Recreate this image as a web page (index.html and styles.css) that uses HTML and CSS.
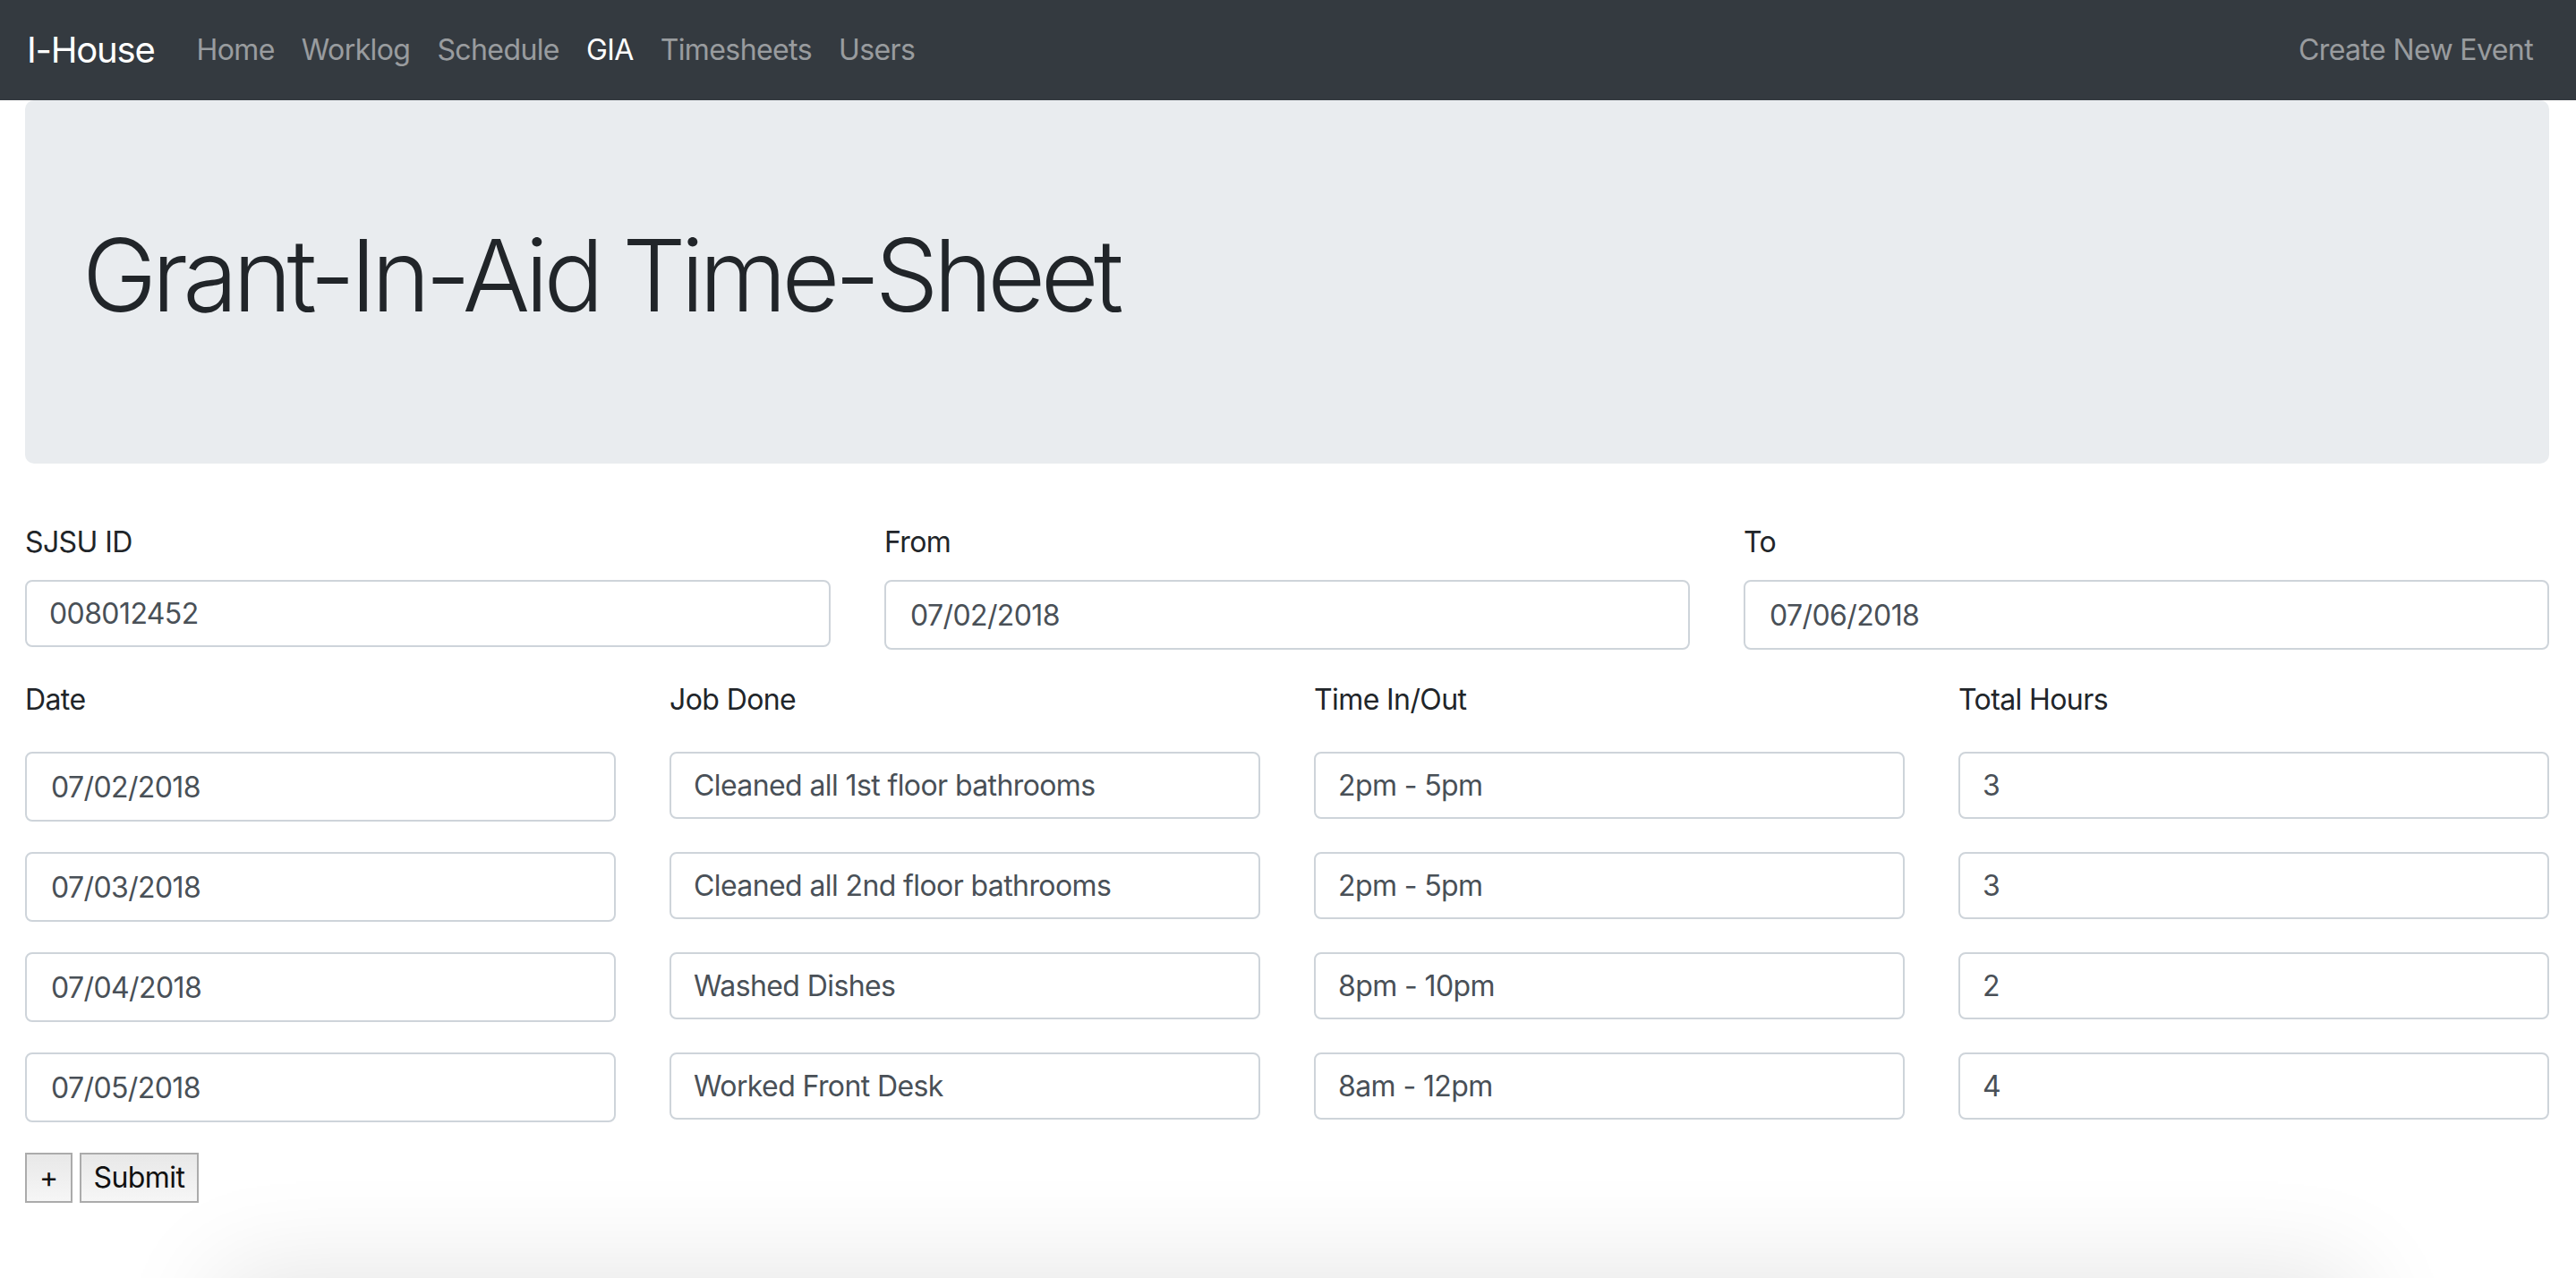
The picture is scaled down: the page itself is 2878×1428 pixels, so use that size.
FILE: index.html
```html
<!DOCTYPE html>
<html lang="en">
<head>
<meta charset="utf-8">
<title>Grant-In-Aid Time-Sheet</title>
<link rel="stylesheet" href="styles.css">
</head>
<body>
<nav class="navbar">
  <a class="brand" href="#">I-House</a>
  <ul class="nav">
    <li><a class="nav-link" href="#">Home</a></li>
    <li><a class="nav-link" href="#">Worklog</a></li>
    <li><a class="nav-link" href="#">Schedule</a></li>
    <li><a class="nav-link active" href="#">GIA</a></li>
    <li><a class="nav-link" href="#">Timesheets</a></li>
    <li><a class="nav-link" href="#">Users</a></li>
  </ul>
  <ul class="nav nav-right">
    <li><a class="nav-link" href="#">Create New Event</a></li>
  </ul>
</nav>
<main class="container">
  <div class="jumbotron">
    <h1 class="display">Grant-In-Aid Time-Sheet</h1>
  </div>
  <form class="sheet">
    <div class="grid3 group">
      <div class="field">
        <label class="label">SJSU ID</label>
        <input class="control" type="text" value="008012452">
      </div>
      <div class="field">
        <label class="label">From</label>
        <input class="control date" type="text" value="07/02/2018">
      </div>
      <div class="field">
        <label class="label">To</label>
        <input class="control date" type="text" value="07/06/2018">
      </div>
    </div>
    <div class="grid4 heads">
      <label class="label">Date</label>
      <label class="label">Job Done</label>
      <label class="label">Time In/Out</label>
      <label class="label">Total Hours</label>
    </div>
    <div class="grid4 entry">
      <input class="control date" type="text" value="07/02/2018">
      <input class="control" type="text" value="Cleaned all 1st floor bathrooms">
      <input class="control" type="text" value="2pm - 5pm">
      <input class="control" type="text" value="3">
    </div>
    <div class="grid4 entry">
      <input class="control date" type="text" value="07/03/2018">
      <input class="control" type="text" value="Cleaned all 2nd floor bathrooms">
      <input class="control" type="text" value="2pm - 5pm">
      <input class="control" type="text" value="3">
    </div>
    <div class="grid4 entry">
      <input class="control date" type="text" value="07/04/2018">
      <input class="control" type="text" value="Washed Dishes">
      <input class="control" type="text" value="8pm - 10pm">
      <input class="control" type="text" value="2">
    </div>
    <div class="grid4 entry">
      <input class="control date" type="text" value="07/05/2018">
      <input class="control" type="text" value="Worked Front Desk">
      <input class="control" type="text" value="8am - 12pm">
      <input class="control" type="text" value="4">
    </div>
    <div class="actions">
      <button class="btn" type="button">+</button>
      <button class="btn" type="submit">Submit</button>
    </div>
  </form>
  <div class="below-card"></div>
</main>
</body>
</html>
```

FILE: styles.css
```css
html, body {
  margin: 0;
  padding: 0;
  overflow: hidden;
  background: #fff;
}
body {
  font-family: Inter, "Noto Sans", "Liberation Sans", sans-serif;
  font-size: 32px;
  line-height: 1.5;
  letter-spacing: -0.6px;
  color: #212529;
}
a { text-decoration: none; }

.navbar {
  display: flex;
  align-items: center;
  height: 112px;
  box-sizing: border-box;
  padding: 16px 32px 16px 30px;
  background: #343a40;
}
.brand {
  font-size: 40px;
  line-height: 60px;
  letter-spacing: -1.2px;
  padding: 10px 0;
  margin-right: 32px;
  color: #fff;
  white-space: nowrap;
}
.nav {
  display: flex;
  list-style: none;
  margin: 0;
  padding: 0;
}
.nav-right { margin-left: auto; }
.nav-link {
  display: block;
  padding: 16px 15px;
  color: rgba(255, 255, 255, 0.5);
  white-space: nowrap;
}
.nav-right .nav-link { padding-right: 16px; }
.nav-link.active { color: #fff; }

.container {
  padding: 0 30px 0 28px;
}
.jumbotron {
  background: #e9ecef;
  border-radius: 10px;
  padding: 128px 64px;
  margin-bottom: 64px;
}
.display {
  margin: 0 0 16px;
  font-size: 112px;
  font-weight: 300;
  line-height: 1.2;
  letter-spacing: -5.6px;
}

.grid3 {
  display: grid;
  grid-template-columns: repeat(3, 1fr);
  column-gap: 60px;
}
.grid4 {
  display: grid;
  grid-template-columns: repeat(4, 1fr);
  column-gap: 60px;
  align-items: start;
}
.group { margin-bottom: 32px; }
.field { display: flex; flex-direction: column; align-items: stretch; }
.label {
  display: block;
  line-height: 48px;
}
.field .label { margin-bottom: 18px; }
.heads { margin-bottom: 34px; }
.entry { margin-bottom: 34px; }

.control {
  display: block;
  width: 100%;
  box-sizing: border-box;
  height: 75px;
  padding: 0 24px 0 25px;
  font-family: inherit;
  font-size: 32px;
  letter-spacing: -0.6px;
  color: #495057;
  background: #fff;
  border: 2px solid #ced4da;
  border-radius: 8px;
  outline: none;
}
.control.date {
  height: 78px;
  padding-left: 27px;
}

.actions {
  display: flex;
  gap: 8px;
}
.btn {
  height: 56px;
  padding: 0 14px;
  font-family: inherit;
  font-size: 32px;
  line-height: 48px;
  letter-spacing: -0.6px;
  color: #111;
  background: linear-gradient(#e8e8e8, #f6f6f6);
  border: 2px solid #ababab;
  border-radius: 0;
}

.below-card {
  margin: 92px 230px 0;
  height: 400px;
  background: #fff;
  box-shadow: 0 0 110px 14px rgba(0, 0, 0, 0.11);
}
```
